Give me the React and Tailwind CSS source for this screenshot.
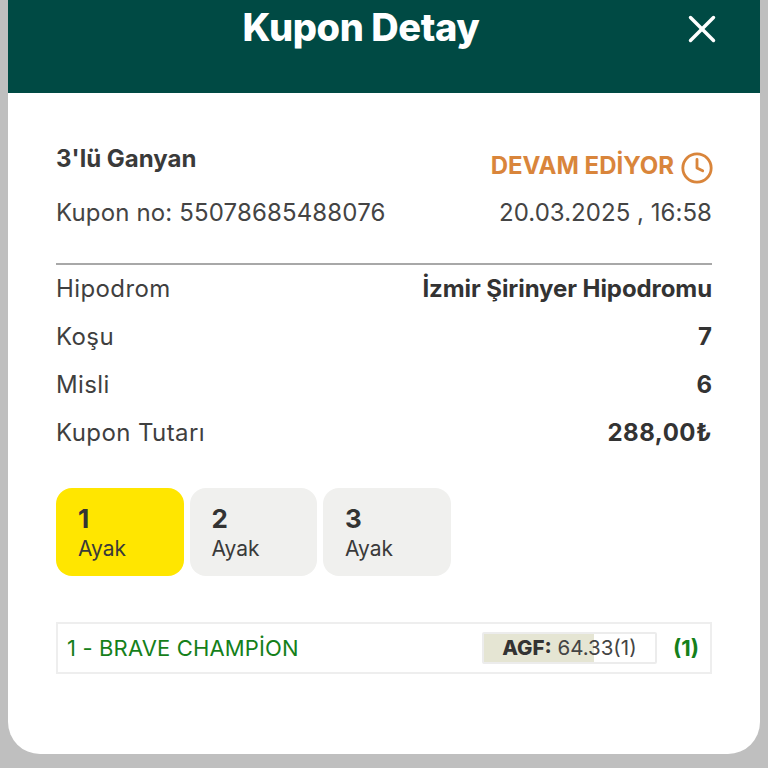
import { X, Clock } from 'lucide-react';

const InfoRow = ({ label, value, valueClass = '' }) => (
  <div className="flex items-center justify-between h-12">
    <span className="text-[24px] tracking-[0.4px] text-[#3f3f3f]">{label}</span>
    <span className={`text-[24px] font-bold text-[#333333] ${valueClass}`}>{value}</span>
  </div>
);

const LegTab = ({ num, active }) => (
  <div className={`w-[127.5px] h-[88px] rounded-[16px] pl-[22px] pt-[15px] ${active ? 'bg-[#ffe600]' : 'bg-[#f0f0ee]'}`}>
    <div className="text-[26px] leading-[32px] font-bold text-[#333333]">{num}</div>
    <div className="text-[21px] leading-[28px] text-[#3a3a3a]">Ayak</div>
  </div>
);

export default function App() {
  return (
    <div className="w-[768px] h-[768px] overflow-hidden bg-[#bfbfbf] px-2 font-['Inter',sans-serif]">
      <div className="h-[754px] bg-white rounded-b-[32px] overflow-hidden">
        {/* Header */}
        <div className="relative h-[93px] bg-[#004a44] text-white">
          <h1 className="text-center pr-[46px] text-[38px] leading-[54px] font-extrabold tracking-[-0.4px]">Kupon Detay</h1>
          <X className="absolute right-[35px] top-[6px] text-white" size={46} strokeWidth={1.8} />
        </div>

        <div className="px-12 pt-[48px]">
          {/* Summary */}
          <div className="flex justify-between items-start">
            <span className="text-[24px] leading-[36px] font-bold text-[#3a3a3a]">3'lü Ganyan</span>
            <div className="flex items-center gap-[6px] h-[54px] -mr-[2px]">
              <span className="text-[24px] font-bold text-[#d9853b] mb-1">DEVAM EDİYOR</span>
              <Clock className="text-[#d9853b]" size={34} strokeWidth={2} />
            </div>
          </div>
          <div className="flex justify-between items-center text-[24px] leading-[36px] text-[#444444]">
            <span className="tracking-[0.15px]">Kupon no: 55078685488076</span>
            <span className="tracking-[0.04px]">20.03.2025 , 16:58</span>
          </div>

          <div className="border-t-2 border-[#a8a8a8] mt-[32px]"></div>

          {/* Details */}
          <div>
            <InfoRow label="Hipodrom" value="İzmir Şirinyer Hipodromu" valueClass="tracking-[-0.08px]" />
            <InfoRow label="Koşu" value="7" />
            <InfoRow label="Misli" value="6" />
            <InfoRow label="Kupon Tutarı" value="288,00₺" valueClass="tracking-[0.5px]" />
          </div>

          {/* Legs */}
          <div className="flex gap-[6px] mt-[31px]">
            <LegTab num="1" active />
            <LegTab num="2" />
            <LegTab num="3" />
          </div>

          {/* Horse */}
          <div className="flex items-center justify-between h-[52px] mt-[46px] border-2 border-[#eeeeee] pl-[9px] pr-[11px]">
            <span className="text-[22px] tracking-[0.15px] text-[#15801a]">1 - BRAVE CHAMPİON</span>
            <div className="flex items-center gap-[16px]">
              <div className="relative w-[175px] h-[32px] border-2 border-[#ececec] rounded-[2px] bg-white overflow-hidden flex items-center justify-center text-[20.5px] text-[#444444]">
                <div className="absolute left-0 top-0 bottom-0 bg-[#e5e5d3]" style={{ width: '64.33%' }}></div>
                <span className="relative"><b className="font-extrabold text-[#333333]">AGF:</b> 64.33(1)</span>
              </div>
              <span className="text-[22px] font-bold text-[#15801a]">(1)</span>
            </div>
          </div>
        </div>
      </div>
    </div>
  );
}
